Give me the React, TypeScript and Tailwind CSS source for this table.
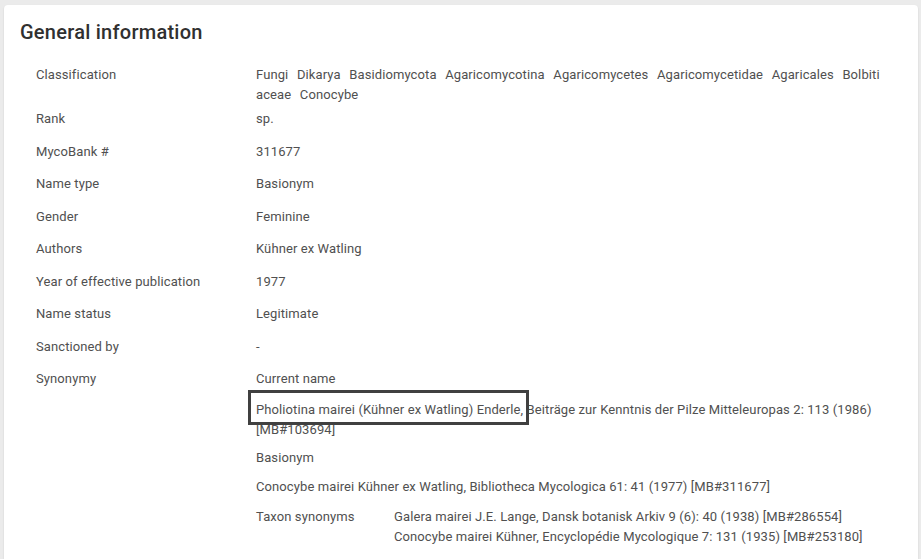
import React from 'react';

type Row = { label: string; value: React.ReactNode };

const classification = [
  'Fungi',
  'Dikarya',
  'Basidiomycota',
  'Agaricomycotina',
  'Agaricomycetes',
  'Agaricomycetidae',
  'Agaricales',
  'Bolbitiaceae',
  'Conocybe',
];

const Synonymy: React.FC = () => (
  <div className="flex flex-col">
    <p>Current name</p>
    <div className="relative mt-[11px]">
      <p>
        Pholiotina mairei (Kühner ex Watling) Enderle, Beiträge zur Kenntnis der Pilze Mitteleuropas 2: 113 (1986)
        [MB#103694]
      </p>
      {/* annotation box drawn over the current name */}
      <div className="absolute left-[-8px] top-[-10px] w-[281px] h-[35px] border-[3px] border-[#404040]" />
    </div>
    <p className="mt-[8px]">Basionym</p>
    <p className="mt-[9px]">Conocybe mairei Kühner ex Watling, Bibliotheca Mycologica 61: 41 (1977) [MB#311677]</p>
    <div className="mt-[10px] grid grid-cols-[138px_1fr]">
      <p>Taxon synonyms</p>
      <div>
        <p>Galera mairei J.E. Lange, Dansk botanisk Arkiv 9 (6): 40 (1938) [MB#286554]</p>
        <p>Conocybe mairei Kühner, Encyclopédie Mycologique 7: 131 (1935) [MB#253180]</p>
      </div>
    </div>
  </div>
);

const rows: Row[] = [
  {
    label: 'Classification',
    value: <p className="break-all [word-spacing:5.3px]">{classification.join(' ')}</p>,
  },
  { label: 'Rank', value: 'sp.' },
  { label: 'MycoBank #', value: '311677' },
  { label: 'Name type', value: 'Basionym' },
  { label: 'Gender', value: 'Feminine' },
  { label: 'Authors', value: 'Kühner ex Watling' },
  { label: 'Year of effective publication', value: '1977' },
  { label: 'Name status', value: 'Legitimate' },
  { label: 'Sanctioned by', value: '-' },
  { label: 'Synonymy', value: <Synonymy /> },
];

const App: React.FC = () => {
  return (
    <div
      className="w-[921px] h-[559px] overflow-hidden bg-[#ebebeb] pt-[5px] pl-[4px] pr-[3px]"
      style={{ fontFamily: 'Roboto, "Liberation Sans", sans-serif' }}
    >
      <div className="h-[600px] bg-white rounded-[4px] shadow-[0_1px_2px_rgba(0,0,0,0.12)] pt-[13px] pl-[16px]">
        <h2 className="text-[20px] leading-[28px] font-medium tracking-[0.25px] text-[#303030]">General information</h2>
        <div className="mt-[19px] pl-[16px] text-[13px] leading-[20px] tracking-[0.1px] text-[#505050]">
          {rows.map((row) => (
            <div key={row.label} className="grid grid-cols-[220px_628px] min-h-[32.5px] pb-1">
              <div>{row.label}</div>
              <div>{row.value}</div>
            </div>
          ))}
        </div>
      </div>
    </div>
  );
};

export default App;
